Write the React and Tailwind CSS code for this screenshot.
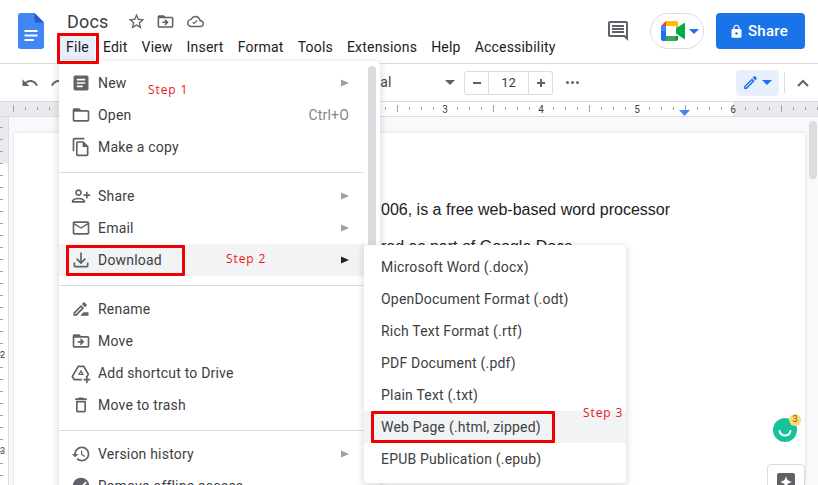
const P = {
  article: "M19 3H5c-1.1 0-2 .9-2 2v14c0 1.1.9 2 2 2h14c1.1 0 2-.9 2-2V5c0-1.1-.9-2-2-2zm-5 14H7v-2h7v2zm3-4H7v-2h10v2zm0-4H7V7h10v2z",
  folder: "M20 6h-8l-2-2H4c-1.1 0-2 .9-2 2v12c0 1.1.9 2 2 2h16c1.1 0 2-.9 2-2V8c0-1.1-.9-2-2-2zm0 12H4V8h16v10z",
  copy: "M16 1H4c-1.1 0-2 .9-2 2v14h2V3h12V1zM15 5H8c-1.1 0-2 .9-2 2v14c0 1.1.9 2 2 2h11c1.1 0 2-.9 2-2V11l-6-6zm4 16H8V7h6v5h5v9z",
  share: "M15 12c2.21 0 4-1.79 4-4s-1.79-4-4-4-4 1.79-4 4 1.79 4 4 4zm0-6c1.1 0 2 .9 2 2s-.9 2-2 2-2-.9-2-2 .9-2 2-2zm0 8c-2.67 0-8 1.34-8 4v2h16v-2c0-2.66-5.33-4-8-4zm-6 4c.22-.72 3.31-2 6-2 2.7 0 5.8 1.29 6 2H9zm-3-3v-3h3v-2H6V7H4v3H1v2h3v3h2z",
  mail: "M20 4H4c-1.1 0-2 .9-2 2v12c0 1.1.9 2 2 2h16c1.1 0 2-.9 2-2V6c0-1.1-.9-2-2-2zm0 14H4V8l8 5 8-5v10zm-8-7L4 6h16l-8 5z",
  download: "M19 15v4H5v-4H3v4c0 1.1.9 2 2 2h14c1.1 0 2-.9 2-2v-4h-2zm-1-4-1.41-1.41L13 13.17V3h-2v10.17L7.41 9.59 6 11l6 6 6-6z",
  rename: "M15 16l-4 4h10v-4h-6zM12.06 7.19 3 16.25V20h3.75l9.06-9.06-3.75-3.75zM5.92 18H5v-.92l7.06-7.06.92.92L5.92 18zM18.71 8.04c.39-.39.39-1.02 0-1.41l-2.34-2.34c-.39-.39-1.02-.39-1.41 0l-1.83 1.83 3.75 3.75 1.83-1.83z",
  move: "M20 6h-8l-2-2H4c-1.1 0-2 .9-2 2v12c0 1.1.9 2 2 2h16c1.1 0 2-.9 2-2V8c0-1.1-.9-2-2-2zm0 12H4V8h16v10zM12 17l-1.41-1.41L12.17 14H8v-2h4.17l-1.58-1.59L12 9l4 4z",
  trash: "M6 19c0 1.1.9 2 2 2h8c1.1 0 2-.9 2-2V7H6v12zM8 9h8v10H8V9zm7.5-5-1-1h-5l-1 1H5v2h14V4h-3.5z",
  history: "M13 3c-4.97 0-9 4.03-9 9H1l3.89 3.89.07.14L9 12H6c0-3.87 3.13-7 7-7s7 3.13 7 7-3.13 7-7 7c-1.93 0-3.68-.79-4.94-2.06l-1.42 1.42C8.27 19.99 10.51 21 13 21c4.97 0 9-4.03 9-9s-4.03-9-9-9zm-1 5v5l4.28 2.54.72-1.21-3.5-2.08V8H12z",
  star: "M22 9.24l-7.19-.62L12 2 9.19 8.63 2 9.24l5.46 4.73L5.82 21 12 17.27 18.18 21l-1.63-7.03L22 9.24zM12 15.4l-3.76 2.27 1-4.28-3.32-2.88 4.38-.38L12 6.1l1.71 4.04 4.38.38-3.32 2.88 1 4.28L12 15.4z",
  cloud: "M19.35 10.04C18.67 6.59 15.64 4 12 4 9.11 4 6.6 5.64 5.35 8.04 2.34 8.36 0 10.91 0 14c0 3.31 2.69 6 6 6h13c2.76 0 5-2.24 5-5 0-2.64-2.05-4.78-4.65-4.96zM19 18H6c-2.21 0-4-1.79-4-4 0-2.05 1.53-3.76 3.56-3.97l1.07-.11.5-.95C8.08 7.14 9.94 6 12 6c2.62 0 4.88 1.86 5.39 4.43l.3 1.5 1.53.11c1.56.1 2.78 1.41 2.78 2.96 0 1.65-1.35 3-3 3zm-9-1.82l-2.6-2.6 1.2-1.2 1.4 1.4 3.9-3.9 1.2 1.2z",
  comment: "M21.99 4c0-1.1-.89-2-1.99-2H4c-1.1 0-2 .9-2 2v12c0 1.1.9 2 2 2h14l4 4-.01-18zM20 4v13.17L18.83 16H4V4h16zM6 12h12v2H6zm0-3h12v2H6zm0-3h12v2H6z",
  lock: "M18 8h-1V6c0-2.76-2.24-5-5-5S7 3.24 7 6v2H6c-1.1 0-2 .9-2 2v10c0 1.1.9 2 2 2h12c1.1 0 2-.9 2-2V10c0-1.1-.9-2-2-2zm-6 9c-1.1 0-2-.9-2-2s.9-2 2-2 2 .9 2 2-.9 2-2 2zm3.1-9H8.9V6c0-1.71 1.39-3.1 3.1-3.1 1.71 0 3.1 1.39 3.1 3.1v2z",
  pencil: "M3 17.25V21h3.75L17.81 9.94l-3.75-3.75L3 17.25zM5.92 19H5v-.92l9.06-9.06.92.92L5.92 19zM20.71 5.63l-2.34-2.34c-.39-.39-1.02-.39-1.41 0l-1.83 1.83 3.75 3.75 1.83-1.83c.39-.39.39-1.03 0-1.41z",
  undo: "M12.5 8c-2.65 0-5.05.99-6.9 2.6L2 7v9h9l-3.62-3.62c1.39-1.16 3.16-1.88 5.12-1.88 3.54 0 6.55 2.31 7.6 5.5l2.37-.78C21.08 11.03 17.15 8 12.5 8z",
  shortcut: "M8.2 3h7.6l6.2 10.6-2.4 3.9h-1.9v-2h.8l1.2-1.9L14.7 5H9.3l-6.6 11.3L4.4 19H13v2H3.3L.4 16.3zM12 8.2l3.7 6.3H8.3zm0 3.2-1.2 1.9h2.4zM18 16h2v3h3v2h-3v3h-2v-3h-3v-2h3z",
};

const Icon = ({ d, className = "", size = 18 }) => (
  <svg viewBox="0 0 24 24" width={size} height={size} fill="currentColor" className={className}>
    <path d={d} />
  </svg>
);

const Arrow = ({ dark }) => (
  <svg viewBox="0 0 8 8" width="8" height="8" className={dark ? "text-[#202124]" : "text-[#9aa0a6]"} fill="currentColor">
    <path d="M0 0.5 8 4 0 7.5z" />
  </svg>
);

const Caret = ({ className = "" }) => (
  <svg viewBox="0 0 10 5" width="10" height="5" fill="currentColor" className={className}>
    <path d="M0 0h10L5 5z" />
  </svg>
);

const Row = ({ icon, label, arrow, shortcut, hot, flip }) => (
  <div className={`relative flex h-[32px] items-center pl-[12px] pr-[15px] text-[14px] tracking-[0.2px] text-[#3c4043] ${hot ? "bg-[#f1f3f4]" : ""}`}>
    <span className="flex w-[27px] shrink-0 items-center text-[#5f6368]">
      {icon && <Icon d={icon} className={flip ? "-scale-x-100" : ""} size={20} />}
    </span>
    <span className="flex-1 whitespace-nowrap">{label}</span>
    {shortcut && <span className="text-[14px] text-[#80868b]">{shortcut}</span>}
    {arrow && <Arrow dark={hot} />}
  </div>
);

const Sep = () => <div className="mb-[7px] mt-[9px] h-px bg-[#dadce0]" />;

const Step = ({ children, className = "" }) => (
  <span className={`absolute font-['Open_Sans',sans-serif] text-[12px] leading-[16px] tracking-[0.9px] text-[#f01515] ${className}`}>{children}</span>
);

const RedBox = ({ className = "" }) => (
  <div className={`pointer-events-none absolute rounded-[1px] border-[3px] border-[#f00000] ${className}`} />
);

const MenuBar = ["Edit", "View", "Insert", "Format", "Tools", "Extensions", "Help", "Accessibility"];
const Formats = [
  "Microsoft Word (.docx)",
  "OpenDocument Format (.odt)",
  "Rich Text Format (.rtf)",
  "PDF Document (.pdf)",
  "Plain Text (.txt)",
  "Web Page (.html, zipped)",
  "EPUB Publication (.epub)",
];

const hTicks = Array.from({ length: 68 }, (_, i) => 13 + i * 12);
const vTicks = Array.from({ length: 30 }, (_, i) => 127 + i * 12);

export default function App() {
  return (
    <div className="relative flex h-[485px] w-[818px] flex-col overflow-hidden bg-white font-['Roboto',sans-serif]">
      {/* Header */}
      <header className="flex h-[64px] shrink-0 border-b border-[#dadce0] pl-[18px] pr-[13px]">
        <svg viewBox="0 0 26 36" width="26" height="36" className="mt-[13px] shrink-0">
          <path d="M2.5 0H16.5L26 9.5V33.5C26 35 25 36 23.5 36H2.5C1 36 0 35 0 33.5V2.5C0 1 1 0 2.5 0Z" fill="#4285f4" />
          <path d="M16.5 0 26 9.5H18.5C17.4 9.5 16.5 8.6 16.5 7.5Z" fill="#2a56c6" />
          <path d="M6.5 17H19.5V19H6.5ZM6.5 21.5H19.5V23.5H6.5ZM6.5 26H16V28H6.5Z" fill="#fff" />
        </svg>
        <div className="ml-[16px] flex flex-col pt-[8px]">
          <div className="flex h-[27px] items-center">
            <span className="ml-[7px] text-[18px] leading-[24px] tracking-[0.15px] text-[#3c4043]">Docs</span>
            <div className="ml-[19px] flex items-center text-[#5f6368]">
              <Icon d={P.star} size={19} />
              <Icon d={P.move} size={19} className="ml-[10px]" />
              <Icon d={P.cloud} size={17} className="ml-[12px]" />
            </div>
          </div>
          <nav className="flex h-[25px] items-center text-[14px] tracking-[0.2px] text-[#202124]">
            <span className="flex h-[25px] w-[35px] items-center justify-center bg-[#e8eefa]">File</span>
            <div className="ml-[1px] flex">
              {MenuBar.map((m) => (
                <span key={m} className="px-[7px]">{m}</span>
              ))}
            </div>
          </nav>
        </div>
        <div className="ml-auto mt-[13px] flex h-[36px] items-center">
          <Icon d={P.comment} size={24} className="text-[#5f6368]" />
          <div className="ml-[20px] flex h-[36px] w-[54px] items-center rounded-full border border-[#dadce0] pl-[10px]">
            <svg viewBox="0 0 24 20" width="24" height="20">
              <path d="M5 0H15V5H5Z" fill="#fbbc04" />
              <path d="M5 0V5H0Z" fill="#ea4335" />
              <path d="M0 5H5V10H0Z" fill="#4285f4" />
              <path d="M0 10H5V20H2C.9 20 0 19.1 0 18Z" fill="#1a73e8" />
              <path d="M5 15H15V20H5Z" fill="#34a853" />
              <path d="M15 0C16 0 17 1 17 2V7L15 10V5Z" fill="#fbbc04" />
              <path d="M15 15H17V18C17 19 16 20 15 20Z" fill="#188038" />
              <path d="M12 10 17 6 24 1.5V18.5L17 14Z" fill="#00ac47" />
              <path d="M15 5V15H5V10Z" fill="#fff" />
            </svg>
            <Caret className="ml-[4px] text-[#1a73e8]" />
          </div>
          <button className="ml-[12px] flex h-[36px] w-[89px] items-center rounded-[4px] bg-[#1a73e8] pl-[13px] text-[15px] font-medium tracking-[0.25px] text-white">
            <Icon d={P.lock} size={15} />
            <span className="ml-[4px]">Share</span>
          </button>
        </div>
      </header>

      {/* Toolbar */}
      <div className="flex h-[38px] shrink-0 items-center border-b border-[#dadce0] pl-[21px] pr-[9px] text-[#5f6368]">
        <Icon d={P.undo} size={18} />
        <Icon d={P.undo} size={18} className="ml-[11px] -scale-x-100" />
        <span className="ml-[295px] w-[12px] text-[14px] text-[#3c4043]">Arial</span>
        <Caret className="ml-[70px] text-[#5f6368]" />
        <div className="ml-[9px] flex h-[24px] w-[89px] items-center rounded-[3px] border border-[#dadce0] text-[#3c4043]">
          <span className="flex h-full w-[24px] items-center justify-center border-r border-[#dadce0] text-[#5f6368]">
            <span className="h-[2px] w-[8px] bg-[#5f6368]" />
          </span>
          <span className="flex-1 text-center text-[13px]">12</span>
          <span className="relative flex h-full w-[24px] items-center justify-center border-l border-[#dadce0]">
            <span className="h-[2px] w-[8px] bg-[#5f6368]" />
            <span className="absolute h-[8px] w-[2px] bg-[#5f6368]" />
          </span>
        </div>
        <div className="ml-[13px] flex gap-[2px]">
          <span className="size-[3px] rounded-full bg-[#5f6368]" />
          <span className="size-[3px] rounded-full bg-[#5f6368]" />
          <span className="size-[3px] rounded-full bg-[#5f6368]" />
        </div>
        <div className="ml-auto flex h-[26px] w-[43px] items-center rounded-[4px] bg-[#e8f0fe] pl-[6px] text-[#1a73e8]">
          <Icon d={P.pencil} size={17} />
          <Caret className="ml-[3px]" />
        </div>
        <span className="ml-[5px] h-[21px] w-px bg-[#dadce0]" />
        <svg viewBox="0 0 12 8" width="12" height="8" className="ml-[12px] text-[#5f6368]" fill="none" stroke="currentColor" strokeWidth="2">
          <path d="M1 7 6 2l5 5" />
        </svg>
      </div>

      {/* Horizontal ruler */}
      <div className="h-[15px] shrink-0 border-b border-[#dadce0]">
        <svg viewBox="0 0 818 14" width="818" height="14" className="block">
          <rect x="0" y="0" width="90" height="14" fill="#e8eaed" />
          <rect x="733" y="0" width="85" height="14" fill="#e8eaed" />
          {hTicks.map((x) => {
            const major = (x - 13) % 48 === 0;
            if ((x - 445) % 96 === 0) return null;
            return <rect key={x} x={x} y={major ? 3 : 5} width="1" height={major ? 7 : 3} fill="#9aa0a6" />;
          })}
          {[["3", 445], ["4", 541], ["5", 637], ["6", 733]].map(([t, x]) => (
            <text key={t} x={x} y="11" fontSize="10" textAnchor="middle" fill="#3c4043" fontFamily="Roboto, sans-serif">{t}</text>
          ))}
          <path d="M679 8h11l-5.5 6z" fill="#4285f4" />
        </svg>
      </div>

      {/* Canvas */}
      <div className="flex min-h-0 flex-1 bg-[#f8f9fa]">
        <div className="w-[9px] shrink-0 border-r border-[#dadce0] bg-white">
          <svg viewBox="0 0 8 368" width="8" height="368" className="block">
            <rect x="0" y="0" width="8" height="46" fill="#e8eaed" />
            {vTicks.map((y) => (
              <rect key={y} x="0" y={y - 117} width="3" height="1" fill="#9aa0a6" />
            ))}
            <text x="0" y="241" fontSize="9" fill="#3c4043" fontFamily="Roboto, sans-serif">2</text>
            <text x="0" y="337" fontSize="9" fill="#3c4043" fontFamily="Roboto, sans-serif">3</text>
          </svg>
        </div>
        <main className="relative ml-[5px] mt-[16px] w-[791px] bg-white pl-[367px] pt-[67px] font-['Liberation_Sans',sans-serif] text-[#202124] shadow-[0_0_3px_rgba(0,0,0,0.15)]">
          <p className="whitespace-nowrap text-[16px] leading-[20px]">006, is a free web-based word processor</p>
          <p className="mt-[17px] whitespace-nowrap text-[16px] leading-[20px]">red as part of Google Docs</p>
          {/* Grammarly */}
          <div className="absolute left-[759px] top-[285px] flex size-[24px] items-center justify-center rounded-full bg-[#15c39a]">
            <svg viewBox="0 0 24 24" width="24" height="24" fill="none" stroke="#fff" strokeWidth="2" strokeLinecap="round">
              <path d="M6.5 13c.8 3 3 4.5 5.5 4.5s4.7-1.5 5.5-4.5" />
            </svg>
            <span className="absolute -right-[4px] -top-[4px] flex size-[12px] items-center justify-center rounded-full bg-[#ffd670] font-['Roboto',sans-serif] text-[9px] text-[#7a5a00]">3</span>
          </div>
          {/* Explore */}
          <div className="absolute left-[753px] top-[331px] flex h-[40px] w-[38px] justify-center rounded-[4px] border border-[#dadce0] bg-white pt-[8px]">
            <span className="flex size-[18px] items-center justify-center rounded-[2px] bg-[#5f6368]">
              <svg viewBox="0 0 12 12" width="12" height="12" fill="#fff"><path d="M6 0c.6 3.4 2 5 6 6-4 1-5.4 2.6-6 6-.6-3.4-2-5-6-6 4-1 5.4-2.6 6-6z" /></svg>
            </span>
          </div>
        </main>
        <div className="ml-[4px] mt-[4px] h-[58px] w-[8px] rounded-full bg-[#dadce0]" />
      </div>

      {/* File menu */}
      <div className="absolute left-[59px] top-[61px] h-[440px] w-[321px] rounded-[4px] bg-white pt-[6px] shadow-[0_2px_6px_2px_rgba(60,64,67,0.15)]">
        <div className="mr-[16px]">
          <Row icon={P.article} label="New" arrow />
          <Row icon={P.folder} label="Open" shortcut="Ctrl+O" />
          <Row icon={P.copy} label="Make a copy" />
          <Sep />
          <Row icon={P.share} label="Share" arrow flip />
          <Row icon={P.mail} label="Email" arrow />
          <Row icon={P.download} label="Download" arrow hot />
          <Sep />
          <Row icon={P.rename} label="Rename" />
          <Row icon={P.move} label="Move" />
          <Row icon={P.shortcut} label="Add shortcut to Drive" />
          <Row icon={P.trash} label="Move to trash" />
          <Sep />
          <Row icon={P.history} label="Version history" arrow />
          <Row icon="M12 2a10 10 0 1 0 0 20 10 10 0 0 0 0-20zm-2 15-5-5 1.4-1.4 3.6 3.6 7.6-7.6L19 8z" label="Remove offline access" />
        </div>
        <div className="absolute right-[4px] top-[5px] h-[200px] w-[8px] rounded-full bg-[#dadce0]" />
      </div>

      {/* Download submenu */}
      <div className="absolute left-[364px] top-[245px] w-[262px] rounded-[4px] bg-white py-[6px] shadow-[0_2px_6px_2px_rgba(60,64,67,0.15)]">
        {Formats.map((f, i) => (
          <div key={f} className={`flex h-[32px] items-center pl-[17px] text-[14px] tracking-[0.2px] text-[#3c4043] ${i === 5 ? "bg-[#f1f3f4]" : ""}`}>
            {f}
          </div>
        ))}
        <div className="h-[2px]" />
      </div>

      {/* Annotations */}
      <RedBox className="left-[57px] top-[33px] h-[31px] w-[42px]" />
      <RedBox className="left-[66px] top-[245px] h-[31px] w-[119px]" />
      <RedBox className="left-[371px] top-[411px] h-[32px] w-[184px]" />
      <Step className="left-[148px] top-[82px]">Step 1</Step>
      <Step className="left-[226px] top-[251px]">Step 2</Step>
      <Step className="left-[583px] top-[405px]">Step 3</Step>
    </div>
  );
}
